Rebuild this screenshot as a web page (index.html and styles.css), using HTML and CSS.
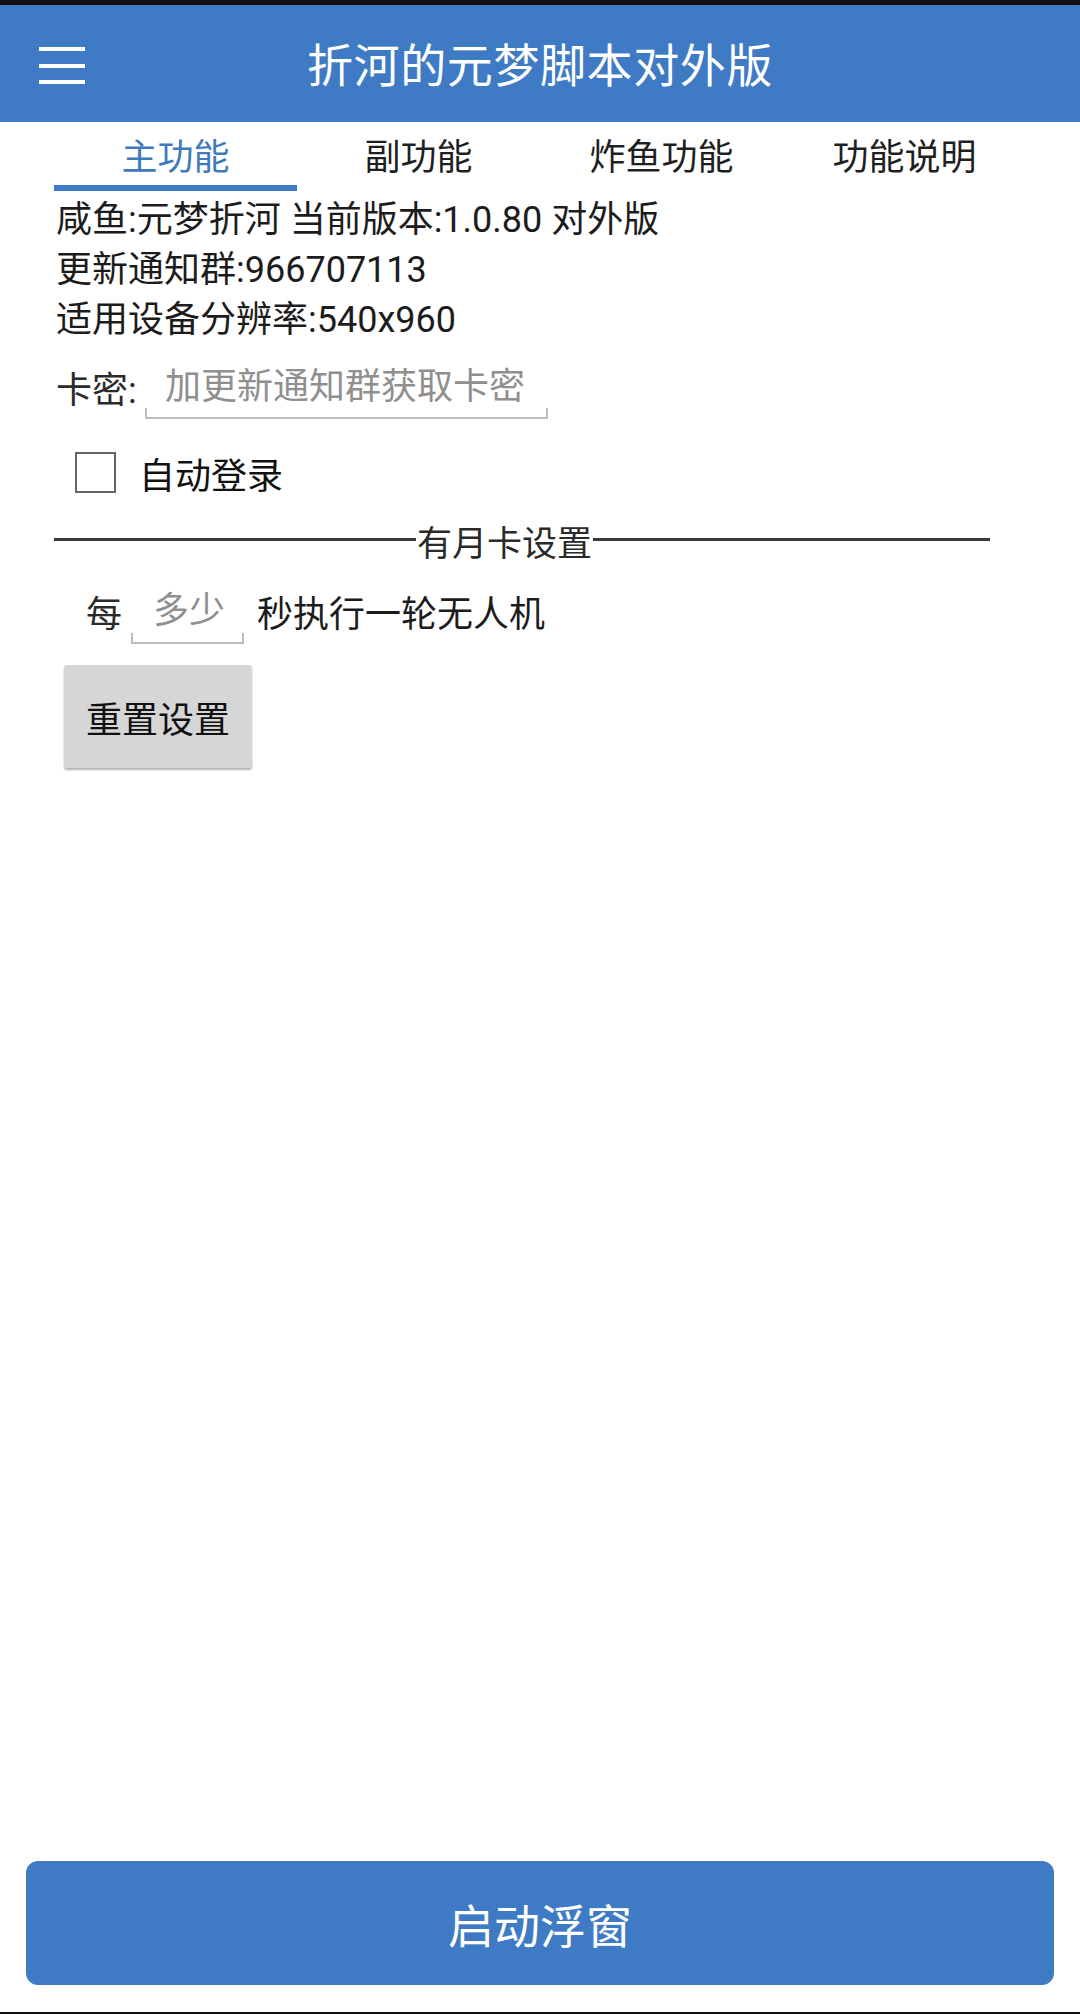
FILE: index.html
```html
<!DOCTYPE html>
<html lang="zh-CN">
<head>
    <meta charset="UTF-8">
    <meta name="viewport" content="width=device-width, initial-scale=1.0">
    <title>折河的元梦脚本对外版</title>
    <link rel="stylesheet" href="styles.css">
</head>
<body>
    <div class="status-strip"></div>

    <header class="app-bar">
        <button class="menu-btn" aria-label="菜单">
            <svg width="48" height="40" viewBox="0 0 48 40">
                <rect x="1" y="5" width="46" height="4" fill="#fff"/>
                <rect x="1" y="22" width="46" height="4" fill="#fff"/>
                <rect x="1" y="38" width="46" height="4" fill="#fff"/>
            </svg>
        </button>
        <h1 class="app-title">折河的元梦脚本对外版</h1>
        <div></div>
    </header>

    <nav class="tabs">
        <div class="tab active">主功能</div>
        <div class="tab">副功能</div>
        <div class="tab">炸鱼功能</div>
        <div class="tab">功能说明</div>
    </nav>

    <main class="content">
        <div class="info-line">咸鱼:元梦折河 当前版本:1.0.80 对外版</div>
        <div class="info-line">更新通知群:966707113</div>
        <div class="info-line">适用设备分辨率:540x960</div>

        <div class="field-row key-row">
            <label for="card-key">卡密:</label>
            <span class="edit edit-key">
                <input type="text" id="card-key" placeholder="加更新通知群获取卡密">
            </span>
        </div>

        <label class="check-row">
            <span class="checkbox"></span>
            <span>自动登录</span>
        </label>

        <div class="divider">
            <span class="divider-line left"></span>
            <span class="divider-text">有月卡设置</span>
            <span class="divider-line right"></span>
        </div>

        <div class="field-row interval-row">
            <span class="prefix">每</span>
            <span class="edit edit-interval">
                <input type="text" placeholder="多少">
            </span>
            <span class="suffix">秒执行一轮无人机</span>
        </div>

        <button class="reset-btn">重置设置</button>
    </main>

    <footer class="footer">
        <button class="start-btn">启动浮窗</button>
    </footer>
    <div class="nav-strip"></div>
</body>
</html>
```

FILE: styles.css
```css
* {
    margin: 0;
    padding: 0;
    box-sizing: border-box;
}

body {
    width: 1080px;
    height: 2014px;
    display: flex;
    flex-direction: column;
    background: #fff;
    color: #1c1c1c;
    font-family: 'Roboto', 'Noto Sans CJK SC', sans-serif;
    overflow: hidden;
}

.status-strip {
    height: 5px;
    background: #111;
}

.nav-strip {
    height: 2px;
    background: #111;
}

.app-bar {
    height: 117px;
    background: #3f7bc4;
    display: grid;
    grid-template-columns: 1fr auto 1fr;
    align-items: center;
    color: #fff;
}

.menu-btn {
    width: 48px;
    height: 46px;
    margin-left: 38px;
    margin-top: -4px;
    background: none;
    border: none;
    display: flex;
    align-items: center;
}

.menu-btn svg {
    height: 46px;
}

.app-title {
    font-size: 46px;
    font-weight: normal;
    letter-spacing: 0.6px;
    margin-top: -4px;
}

.tabs {
    margin: 0 54px;
    display: grid;
    grid-template-columns: repeat(4, 1fr);
    height: 69px;
}

.tab {
    text-align: center;
    font-size: 36px;
    line-height: 50px;
    padding-top: 11px;
    color: #1f1f1f;
}

.tab.active {
    color: #4079bd;
    border-bottom: 6px solid #3f7bc4;
}

.content {
    flex: 1;
    padding-left: 56px;
    padding-top: 4px;
}

.info-line {
    font-size: 36px;
    line-height: 50px;
    color: #1c1c1c;
}

.field-row {
    display: flex;
    align-items: center;
    font-size: 36px;
}

.key-row {
    margin-top: 7px;
}

.key-row label {
    width: 89px;
    color: #2a2a2a;
    padding-top: 3px;
}

.edit {
    position: relative;
    display: block;
    border-bottom: 2px solid #bdbdbd;
}

.edit::after {
    content: '';
    position: absolute;
    left: 0;
    right: 0;
    bottom: 0;
    height: 9px;
    border-left: 2px solid #bdbdbd;
    border-right: 2px solid #bdbdbd;
}

.edit input {
    display: block;
    width: 100%;
    height: 100%;
    border: none;
    outline: none;
    background: transparent;
    font-family: 'Roboto', 'Noto Sans CJK SC', sans-serif;
    font-size: 36px;
    color: #1c1c1c;
}

.edit input::placeholder {
    color: #8f8f8f;
}

.edit-key {
    width: 403px;
    height: 67px;
}

.edit-key input {
    padding-left: 20px;
    padding-top: 4px;
}

.check-row {
    display: flex;
    align-items: center;
    gap: 23px;
    margin-top: 33px;
    margin-left: 19px;
    font-size: 36px;
    color: #111;
    height: 41px;
}

.checkbox {
    width: 41px;
    height: 41px;
    border: 2px solid #666;
    background: #fff;
}

.divider {
    display: flex;
    align-items: center;
    margin-top: 21px;
    margin-left: -2px;
    height: 50px;
}

.divider-line {
    height: 3px;
    background: #3a3a3a;
}

.divider-line.left {
    width: 362px;
}

.divider-line.right {
    width: 397px;
}

.divider-text {
    font-size: 35px;
    color: #2a2a2a;
    width: 177px;
    text-align: center;
    white-space: nowrap;
    padding-top: 2px;
}

.interval-row {
    margin-top: 11px;
    height: 69px;
}

.prefix {
    margin-left: 30px;
    width: 45px;
    color: #2a2a2a;
    padding-top: 3px;
}

.edit-interval {
    width: 113px;
    height: 69px;
}

.edit-interval input {
    padding-left: 22px;
    padding-top: 4px;
}

.suffix {
    margin-left: 13px;
    color: #1c1c1c;
    padding-top: 3px;
}

.reset-btn {
    display: block;
    margin-top: 21px;
    margin-left: 8px;
    width: 188px;
    height: 103px;
    background: #d6d6d6;
    border: none;
    border-radius: 3px;
    box-shadow: 0 2px 2px rgba(0, 0, 0, 0.3);
    font-family: 'Roboto', 'Noto Sans CJK SC', sans-serif;
    font-size: 36px;
    color: #111;
}

.footer {
    padding: 0 26px 27px;
}

.start-btn {
    display: block;
    width: 100%;
    height: 124px;
    background: #3f7bc4;
    border: none;
    border-radius: 12px;
    color: #fff;
    font-family: 'Roboto', 'Noto Sans CJK SC', sans-serif;
    font-size: 46px;
}
```
